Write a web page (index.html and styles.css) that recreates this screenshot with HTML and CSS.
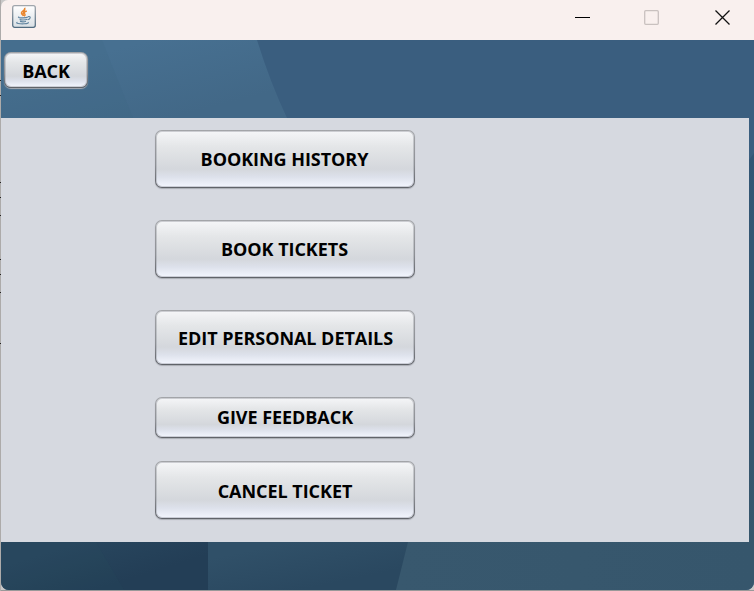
FILE: index.html
```html
<!DOCTYPE html>
<html lang="en">
<head>
<meta charset="utf-8">
<title>Tickets</title>
<link rel="stylesheet" href="styles.css">
</head>
<body>
<div class="window">
  <header class="titlebar">
    <svg class="app-icon" width="24" height="24" viewBox="0 0 24 24" fill="none">
      <defs><linearGradient id="tile" x1="0" y1="0" x2="0" y2="1"><stop offset="0" stop-color="#fff"/><stop offset="1" stop-color="#d9dfe4"/></linearGradient>
      <linearGradient id="rim" x1="0" y1="0" x2="0" y2="1"><stop offset="0" stop-color="#a0a6ac"/><stop offset="1" stop-color="#506b80"/></linearGradient></defs>
      <rect x=".7" y="1.7" width="22.6" height="21.6" rx="2" fill="url(#tile)" stroke="url(#rim)" stroke-width="1.3"/>
      <path d="M12.6 4C14 6.2 8.500 7.3 9.500 9.4C10 10.6 11 11 11.4 12C9.7 8.8 13.8 7.3 12.6 4ZM14.8 7C11.7 8.1 11.9 9 12.8 10.1C13.4 11 12.6 11.8 12 12.2" stroke="#e8862f" stroke-width="1.5"/>
      <path d="M7.2 12.7C5 13.5 8 13.9 11 13.8C13.2 13.8 15 13.5 16 13M7.6 15.4C8.8 16.2 13.2 16.2 15.3 15.3M16 12.6C19.4 11.8 18.6 15.1 15.7 15.7M8 17.4C10 18 13 17.7 14 17.3M5.5 18.2C2.500 19.2 8.3 20 12 19.8C15.600 19.600 17.3 19 15.8 18.2" stroke="#6285a0" stroke-width="1.15"/>
    </svg>
    <div class="controls">
      <svg width="16" height="16" viewBox="0 0 16 16"><path d="M0 8.5H15" stroke="#000"/></svg>
      <svg width="16" height="16" viewBox="0 0 16 16"><rect x="-.3" y="1.7" width="13.6" height="13.6" rx="1" fill="none" stroke="#c9c1bf" stroke-width="1.3"/></svg>
      <svg width="16" height="16" viewBox="0 0 16 16"><path d="M.5 1.5L14.500 15.500M14.5 1.5L.5 15.5" stroke="#111" stroke-width="1.3"/></svg>
    </div>
  </header>
  <main class="content">
    <svg class="backdrop" width="753" height="550" viewBox="1 40 753 550" preserveAspectRatio="none">
      <defs>
        <linearGradient id="sky" gradientUnits="userSpaceOnUse" x1="150" y1="40" x2="170" y2="118"><stop stop-color="#477091"/><stop offset="1" stop-color="#426887"/></linearGradient>
        <linearGradient id="deep" gradientUnits="userSpaceOnUse" x1="80" y1="542" x2="95" y2="590"><stop stop-color="#28465e"/><stop offset="1" stop-color="#233e56"/></linearGradient>
        <linearGradient id="mid" gradientUnits="userSpaceOnUse" x1="290" y1="542" x2="300" y2="590"><stop stop-color="#305068"/><stop offset="1" stop-color="#2a4860"/></linearGradient>
        <linearGradient id="side" x1="0" y1="0" x2="0" y2="1"><stop stop-color="#325675"/><stop offset="1" stop-color="#36566c"/></linearGradient>
        <linearGradient id="low" x1="0" y1="0" x2="1" y2="0"><stop stop-color="#38586e"/><stop offset="1" stop-color="#36566c"/></linearGradient>
      </defs>
      <rect x="1" y="40" width="753" height="550" fill="#3a5e7f"/>
      <path d="M1 40H257Q270 82 287 118H1Z" fill="url(#sky)"/>
      <path d="M1 40H102L133 118H1Z" fill="#365f7d" opacity=".12"/>
      <path d="M749 160L754 153V542H749Z" fill="url(#side)"/>
      <rect x="1" y="542" width="208" height="48" fill="url(#deep)"/>
      <path d="M1 542H96L124 590H1Z" fill="#28505d" opacity=".15"/>
      <path d="M208 542H410L398 590H208Z" fill="url(#mid)"/>
      <path d="M408 542H754V590H396Z" fill="url(#low)"/>
    </svg>
    <nav class="topbar"><button class="btn back"><span>BACK</span></button></nav>
    <section class="panel">
      <button class="btn history"><span>BOOKING HISTORY</span></button>
      <button class="btn book"><span>BOOK TICKETS</span></button>
      <button class="btn edit"><span>EDIT PERSONAL DETAILS</span></button>
      <button class="btn feedback"><span>GIVE FEEDBACK</span></button>
      <button class="btn cancel"><span>CANCEL TICKET</span></button>
    </section>
  </main>
  <svg class="edge" width="1" height="591" viewBox="0 0 1 591" shape-rendering="crispEdges"><path d="M0 80h1v1H0zM0 95h1v1H0zM0 182h1v1H0zM0 197h1v1H0zM0 215h1v1H0zM0 259h1v1H0zM0 274h1v1H0zM0 292h1v1H0zM0 343h1v1H0z" fill="#222"/></svg>
</div>
</body>
</html>
```
FILE: styles.css
```css
* { box-sizing: border-box; }
body { margin: 0; background: #c8c8c8; overflow: hidden; }
.window {
  position: relative;
  width: 754px;
  height: 591px;
  padding: 0 0 1px 1px;
  background: linear-gradient(90deg, #adabaa 1px, transparent 1px), linear-gradient(0deg, #999 1px, #c8c8c8 1px);
}
.edge { position: absolute; left: 0; top: 0; display: block; }
.titlebar {
  height: 40px;
  padding: 4px 23px 0 11px;
  display: flex;
  justify-content: space-between;
  background: #f9f0ee;
  border-top-left-radius: 7px;
}
.app-icon { display: block; }
.controls { display: flex; gap: 54px; padding-top: 5px; }
.controls svg { display: block; overflow: visible; }
.content {
  position: relative;
  height: 550px;
  border-radius: 0 0 8px 8px;
  overflow: hidden;
}
.backdrop { position: absolute; inset: 0; display: block; }
.topbar { position: relative; height: 78px; padding: 12px 3px; }
.panel {
  position: relative;
  display: flex;
  flex-direction: column;
  width: 748px;
  height: 424px;
  padding: 12px 0 0 154px;
  background: #d6d9e0;
}
.btn {
  display: flex;
  align-items: center;
  justify-content: center;
  width: 260px;
  padding: 0;
  border: 1.5px solid transparent;
  border-radius: 7px;
  color: #000;
  font: 700 18px/24px "Open Sans", "Noto Sans", sans-serif;
  letter-spacing: -.05px;
  white-space: nowrap;
  background:
    linear-gradient(#f5f6f8 0%, #e4e6e8 28%, #d4d7dc 68%, #dde1eb 82%, #f3f6fe 100%) padding-box,
    linear-gradient(#a3a5a9, #8c8f94 60%, #5f6268) border-box;
  box-shadow: inset 0 0 0 1px rgba(130, 133, 140, .35), 0 1px 1px #a9acb3;
}
.back { width: 84px; height: 36px; padding-top: 1px; }
.history { height: 58px; margin-bottom: 32px; padding-right: 1px; }
.book { height: 58px; margin-bottom: 32px; padding-right: 1px; }
.edit { height: 55px; margin-bottom: 32px; padding-left: 1px; }
.feedback { height: 41px; margin-bottom: 23px; padding-bottom: 1px; }
.cancel { height: 58px; padding-top: 1px; }
```
